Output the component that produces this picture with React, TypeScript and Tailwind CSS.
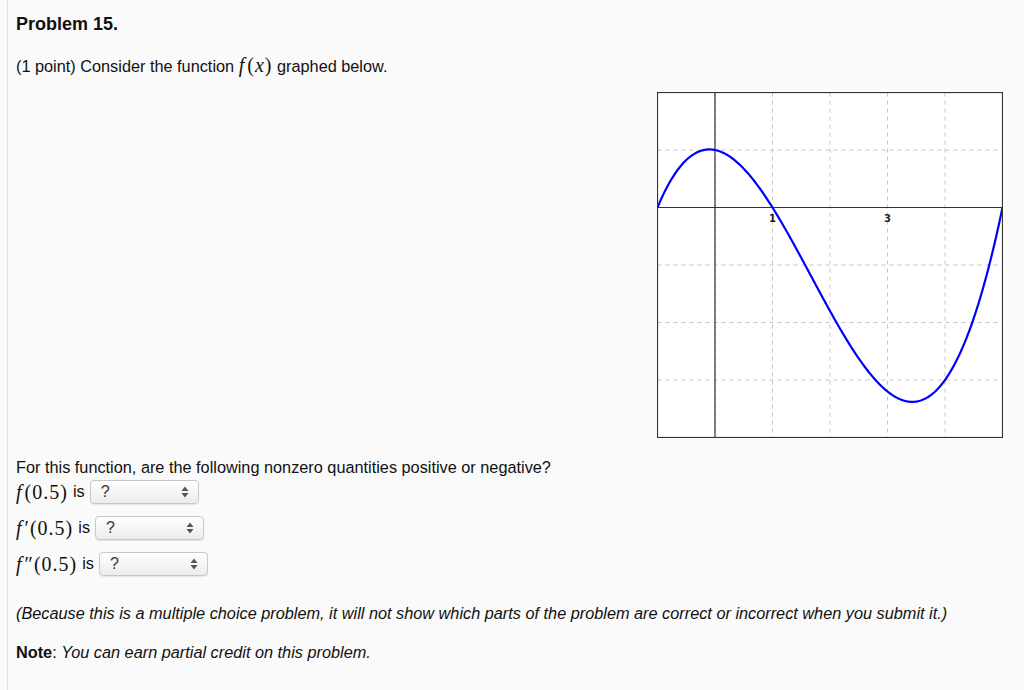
import React from "react";

// graph window: x from -1 to 5, y from -4 to 2, 6x6 grid
const SIZE = 345;
const UNIT = SIZE / 6;

const f = (x: number) => 0.2 * (x * x * x - 5 * x * x - x + 5);

const toPx = (x: number, y: number) => [(x + 1) * UNIT, (2 - y) * UNIT];

const curvePath = () => {
    const pts: string[] = [];
    for (let i = 0; i <= 300; i++) {
        const x = -1 + (6 * i) / 300;
        const [px, py] = toPx(x, f(x));
        pts.push(`${i === 0 ? "M" : "L"}${px.toFixed(2)},${py.toFixed(2)}`);
    }
    return pts.join(" ");
};

const Graph: React.FC = () => {
    const grid = [1, 2, 3, 4, 5];
    return (
        <svg width={SIZE + 1} height={SIZE + 1} viewBox={`-0.5 -0.5 ${SIZE + 1} ${SIZE + 1}`} className="block bg-white">
            {/* dashed grid */}
            {grid.map((i) => (
                <g key={i}>
                    <line x1={i * UNIT} y1={0} x2={i * UNIT} y2={SIZE} stroke="#c4c4c4" strokeWidth={1} strokeDasharray="4 4" />
                    <line x1={0} y1={i * UNIT} x2={SIZE} y2={i * UNIT} stroke="#c4c4c4" strokeWidth={1} strokeDasharray="4 4" />
                </g>
            ))}
            {/* axes */}
            <line x1={UNIT} y1={0} x2={UNIT} y2={SIZE} stroke="#333" strokeWidth={1.2} />
            <line x1={0} y1={2 * UNIT} x2={SIZE} y2={2 * UNIT} stroke="#333" strokeWidth={1.2} />
            {/* tick labels */}
            <text x={2 * UNIT} y={2 * UNIT + 14} textAnchor="middle" fontSize="10" fontWeight="bold" fill="#222" fontFamily="'DejaVu Sans', sans-serif">1</text>
            <text x={4 * UNIT} y={2 * UNIT + 14} textAnchor="middle" fontSize="10" fontWeight="bold" fill="#222" fontFamily="'DejaVu Sans', sans-serif">3</text>
            {/* curve */}
            <path d={curvePath()} fill="none" stroke="#0000ff" strokeWidth={2.2} />
            {/* frame */}
            <rect x={0} y={0} width={SIZE} height={SIZE} fill="none" stroke="#333" strokeWidth={1.2} />
        </svg>
    );
};

const Fn: React.FC<{ prime?: string }> = ({ prime = "" }) => (
    <span className="font-['Liberation_Serif',serif] text-[20px] tracking-[1px]">
        <i className="pr-[2px]">f</i>
        {prime}(0.5)
    </span>
);

const Select: React.FC = () => (
    <div className="ml-[5px] inline-flex h-[24px] w-[109px] items-center justify-between rounded-[4px] border border-[#c8c8c8] bg-gradient-to-b from-white to-[#ececec] pl-[10px] pr-[9px] shadow-[0_1px_1px_rgba(0,0,0,0.08)]">
        <span className="text-[16px] text-[#333]">?</span>
        <svg width="8" height="12" viewBox="0 0 8 12">
            <path d="M4 0.5 L7.5 5 L0.5 5 Z" fill="#555" />
            <path d="M4 11.5 L7.5 7 L0.5 7 Z" fill="#555" />
        </svg>
    </div>
);

const rows = [
    { prime: "" },
    { prime: "\u2032" },
    { prime: "\u2033" },
];

export default function App() {
    return (
        <div className="min-h-screen bg-[#fafafa] font-['Liberation_Sans',Arial,sans-serif] text-[#111]">
            <div className="ml-[7px] min-h-[690px] border-l border-[#e2e2e2] pl-[8px]">
                <h1 className="pt-[14px] text-[18px] font-bold leading-[20px]">Problem 15.</h1>

                <p className="mt-[21px] text-[16.3px] leading-[20px]">
                    (1 point) Consider the function{" "}
                    <span className="font-['Liberation_Serif',serif] text-[20px] tracking-[1px]">
                        <i className="pr-[2px]">f</i>(<i>x</i>)
                    </span>{" "}
                    graphed below.
                </p>

                {/* graph */}
                <div className="mt-[16px] flex justify-end pr-[21px]">
                    <Graph />
                </div>

                <p className="mt-[19px] text-[16.3px] leading-[20px]">
                    For this function, are the following nonzero quantities positive or negative?
                </p>

                <div className="mt-[2px] flex flex-col gap-[11px]">
                    {rows.map((row, i) => (
                        <div key={i} className="flex h-[25px] items-center text-[16.3px]">
                            <Fn prime={row.prime} />
                            <span className="ml-[5px]">is</span>
                            <Select />
                        </div>
                    ))}
                </div>

                <p className="mt-[27px] text-[16.3px] italic leading-[20px]">
                    (Because this is a multiple choice problem, it will not show which parts of the problem are correct or incorrect when you submit it.)
                </p>

                <p className="mt-[19px] text-[16.3px] leading-[20px]">
                    <b>Note</b>: <i>You can earn partial credit on this problem.</i>
                </p>
            </div>
        </div>
    );
}
